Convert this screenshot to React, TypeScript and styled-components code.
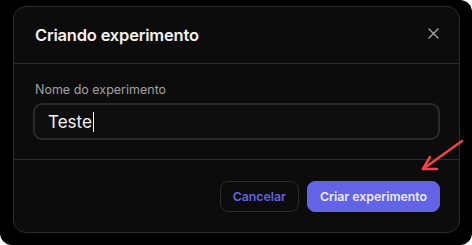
import React from "react";
import styled, { createGlobalStyle } from "styled-components";

const GlobalStyle = createGlobalStyle`
  html, body {
    margin: 0;
    padding: 0;
    background: #ffffff;
  }
  * {
    box-sizing: border-box;
  }
`;

const Backdrop = styled.div`
  position: relative;
  width: 472px;
  height: 245px;
  background: #000000;
  border-radius: 0 12px 12px 12px;
  padding: 6px 12px 12px 13px;
  font-family: Inter, "Noto Sans", sans-serif;
  overflow: hidden;
`;

const Modal = styled.div`
  width: 447px;
  height: 227px;
  background: #0c0c0c;
  border: 1px solid #2b2b2b;
  border-radius: 13px;
  display: flex;
  flex-direction: column;
`;

const Header = styled.div`
  height: 57px;
  display: flex;
  align-items: center;
  justify-content: space-between;
  padding: 0 20px 0 21px;
  border-bottom: 1px solid #2b2b2b;
`;

const Title = styled.h2`
  margin: 0;
  font-size: 16.5px;
  font-weight: 600;
  color: #f2f2f2;
  letter-spacing: -0.2px;
`;

const CloseButton = styled.button`
  background: none;
  border: none;
  padding: 0;
  width: 14px;
  height: 14px;
  display: flex;
  align-items: center;
  justify-content: center;
  color: #a3a3a3;
  margin-right: -1px;
  margin-top: -4px;
`;

const Body = styled.div`
  padding: 18px 19px 19px 19px;
  border-bottom: 1px solid #2b2b2b;
  display: flex;
  flex-direction: column;
  gap: 6px;
`;

const Label = styled.label`
  font-size: 12.5px;
  line-height: 15px;
  color: #a1a1a1;
  padding-left: 2px;
`;

const Field = styled.div`
  height: 37px;
  border: 2px solid #2a2a2a;
  border-radius: 9px;
  background: #0e0e0e;
  display: flex;
  align-items: center;
  padding: 0 13px;
  font-size: 17px;
  color: #f5f5f5;
`;

const Caret = styled.span`
  display: inline-block;
  width: 1px;
  height: 20px;
  background: #f5f5f5;
  margin-left: 1px;
`;

const Footer = styled.div`
  flex: 1;
  display: flex;
  align-items: center;
  justify-content: flex-end;
  gap: 8px;
  padding: 0 19px;
`;

const Button = styled.button<{ $primary?: boolean }>`
  height: 31px;
  padding: 0 12px;
  border-radius: 8px;
  font-family: inherit;
  font-size: 12.3px;
  font-weight: 600;
  border: 1px solid ${(p) => (p.$primary ? "#6363e8" : "#2b2b2b")};
  background: ${(p) => (p.$primary ? "#6363e8" : "transparent")};
  color: ${(p) => (p.$primary ? "#ececfb" : "#6464e0")};
`;

const Arrow = styled.svg`
  position: absolute;
  left: 418px;
  top: 136px;
`;

export default function App() {
  return (
    <>
      <GlobalStyle />
      <Backdrop>
        <Modal>
          <Header>
            <Title>Criando experimento</Title>
            <CloseButton>
              <svg width="11" height="11" viewBox="0 0 11 11">
                <path d="M1 1L10 10M10 1L1 10" stroke="currentColor" strokeWidth="1.4" strokeLinecap="round" />
              </svg>
            </CloseButton>
          </Header>
          <Body>
            <Label>Nome do experimento</Label>
            <Field>
              Teste
              <Caret />
            </Field>
          </Body>
          <Footer>
            <Button>Cancelar</Button>
            <Button $primary>Criar experimento</Button>
          </Footer>
        </Modal>
        <Arrow width="50" height="40" viewBox="0 0 50 40">
          <g stroke="#ee4444" strokeWidth="2.6" strokeLinecap="round" strokeLinejoin="round" fill="none">
            <path d="M44 5L5 33" />
            <path d="M12 21L5 33L19 33" />
          </g>
        </Arrow>
      </Backdrop>
    </>
  );
}
